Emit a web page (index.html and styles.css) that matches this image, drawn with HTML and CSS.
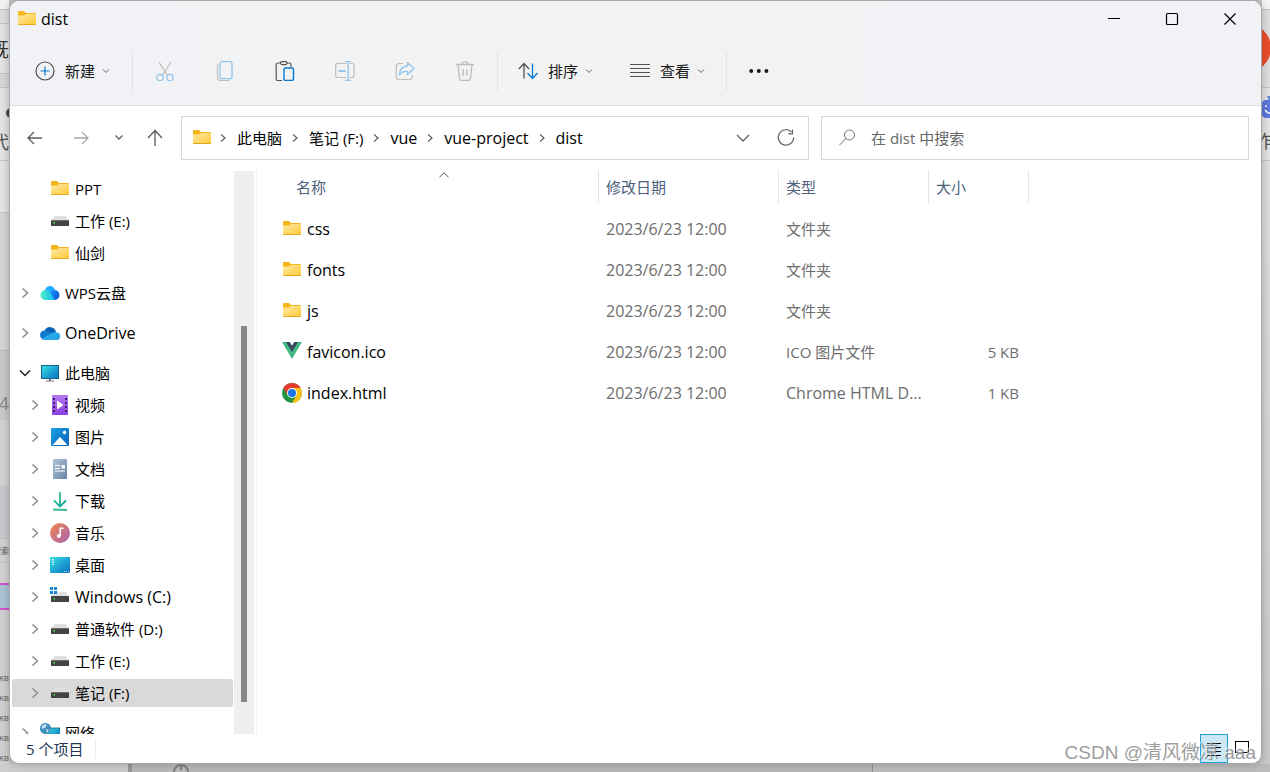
FILE: index.html
```
<!DOCTYPE html>
<html lang="zh-CN">
<head>
<meta charset="utf-8">
<title>dist</title>
<link rel="stylesheet" href="styles.css">
</head>
<body>
<svg class="defs" aria-hidden="true">
  <defs>
    <linearGradient id="gFolder" x1="0" y1="0" x2="1" y2="1"><stop offset="0" stop-color="#ffe9a6"/><stop offset="1" stop-color="#ffca3a"/></linearGradient>
    <linearGradient id="gScreen" x1="0" y1="0" x2="1" y2="1"><stop offset="0" stop-color="#35dfe6"/><stop offset="1" stop-color="#0a6fc0"/></linearGradient>
    <linearGradient id="gVideo" x1="0" y1="0" x2="0" y2="1"><stop offset="0" stop-color="#b678f0"/><stop offset="1" stop-color="#8a3ee0"/></linearGradient>
    <linearGradient id="gPic" x1="0" y1="0" x2="1" y2="1"><stop offset="0" stop-color="#1ba1e6"/><stop offset="1" stop-color="#0a62b4"/></linearGradient>
    <linearGradient id="gDoc" x1="0" y1="0" x2="1" y2="1"><stop offset="0" stop-color="#b0c4d8"/><stop offset="1" stop-color="#6684a6"/></linearGradient>
    <linearGradient id="gMusic" x1="0" y1="0" x2="1" y2="1"><stop offset="0" stop-color="#f58a52"/><stop offset="1" stop-color="#a55fb0"/></linearGradient>
    <linearGradient id="gDown" x1="0" y1="0" x2="1" y2="1"><stop offset="0" stop-color="#3cc98a"/><stop offset="1" stop-color="#0a9f9c"/></linearGradient>
    <linearGradient id="gWps" x1="0" y1="0" x2="1" y2="0"><stop offset="0" stop-color="#4ff0bd"/><stop offset="1" stop-color="#12b8ff"/></linearGradient>
    <linearGradient id="gWps2" x1="0" y1="0" x2="1" y2="1"><stop offset="0" stop-color="#1f9dff"/><stop offset="1" stop-color="#0a48cf"/></linearGradient>
  </defs>
  <symbol id="folder" viewBox="0 0 20 20"><path d="M1 3q0-1 1-1h5l2 2h9q1 0 1 1v10q0 1-1 1H2q-1 0-1-1z" fill="#f7b51c"/><path d="M1 6.500h6L9 5h10v10H1z" fill="url(#gFolder)"/><path d="M1.500 15.500h17" stroke="#e5a51d"/></symbol>
  <symbol id="drive" viewBox="0 0 20 20"><path d="M4.500 5h11L19 9.500H1z" fill="#dfe1e5"/><rect x="1" y="9" width="18" height="6" rx=".6" fill="#444"/><path d="M1 9.500h18" stroke="#777" stroke-width=".8"/><rect x="3.400" y="11" width="1.600" height="1.600" fill="#2fe84d"/></symbol>
  <symbol id="chev-r" viewBox="0 0 20 20"><path d="M7.500 5.500 12.500 10l-5 4.500" fill="none" stroke="currentColor" stroke-width="1.500"/></symbol>
  <symbol id="chev-d" viewBox="0 0 20 20"><path d="M5 7.500l5 5 5-5" fill="none" stroke="currentColor" stroke-width="1.500"/></symbol>
  <symbol id="chev-s" viewBox="0 0 10 10"><path d="M2 3.500l3 3 3-3" fill="none" stroke="currentColor"/></symbol>
</svg>

<div class="desktop">
  <div class="edge edge-left" aria-hidden="true">
    <div class="strip s1"></div><div class="strip s2"></div><div class="strip s3"><span>既</span></div>
    <div class="strip s4"></div><div class="strip s5"><i class="blob"></i><span>代</span></div><div class="strip s6"></div>
    <div class="strip s7"></div><div class="strip s8"></div><div class="strip s9"><span>4</span></div><div class="strip s10"></div>
    <div class="strip s11"></div><div class="strip s12"><span>搜索</span></div><div class="strip s13"></div>
    <div class="strip s14"></div><div class="strip s15"><span>KB</span><span>KB</span><span>KB</span><span>KB</span><span>KB</span></div>
  </div>

  <main class="window">
    <header class="head">
      <div class="titlebar">
        <svg class="ic20"><use href="#folder"/></svg>
        <h1 class="title">dist</h1>
        <div class="wincontrols">
          <button aria-label="最小化"><svg class="ic20" viewBox="0 0 20 20"><path d="M4 9.500h12" stroke="#000"/></svg></button>
          <button aria-label="最大化"><svg class="ic20" viewBox="0 0 20 20"><rect x="4.500" y="4.500" width="11" height="11" rx="1" fill="none" stroke="#000" stroke-width="1.200"/></svg></button>
          <button aria-label="关闭"><svg class="ic20" viewBox="0 0 20 20"><path d="M4.500 4.500l11 11m0-11l-11 11" stroke="#000" stroke-width="1.200"/></svg></button>
        </div>
      </div>
      <div class="commands">
        <button class="cmd cmd-new"><svg class="ic20" viewBox="0 0 20 20"><circle cx="10" cy="10" r="9" fill="none" stroke="#505050" stroke-width="1.200"/><path d="M10 5.500v9M5.500 10h9" stroke="#0a78d0" stroke-width="1.200"/></svg><span>新建</span><svg class="ic10"><use href="#chev-s"/></svg></button>
        <span class="sep"></span>
        <button class="tool" aria-label="剪切" disabled><svg class="ic20" viewBox="0 0 20 20" fill="none"><path d="M4 1l8.500 13.500M16 1L7.500 14.500" stroke="#bdbdbd" stroke-width="1.200"/><circle cx="5" cy="16.500" r="3.200" stroke="#94c5ea" stroke-width="1.300"/><circle cx="15" cy="16.500" r="3.200" stroke="#94c5ea" stroke-width="1.300"/></svg></button>
        <button class="tool" aria-label="复制" disabled><svg class="ic20" viewBox="0 0 20 20" fill="none"><path d="M3.500 3.500Q2.500 4 2.500 5.500V16q0 3.500 3.500 3.500h6.500q1.500 0 2-1" stroke="#bdbdbd" stroke-width="1.200"/><rect x="5" y=".7" width="12" height="17" rx="2" stroke="#94c5ea" stroke-width="1.300"/></svg></button>
        <button class="tool" aria-label="粘贴"><svg class="ic20" viewBox="0 0 20 20" fill="none"><path d="M6 2H2.700Q1.200 2 1.200 3.500V18q0 1.500 1.500 1.500H7M11.500 2h3q1.500 0 1.500 1.500V6" stroke="#555" stroke-width="1.200"/><rect x="5.500" y=".6" width="6.500" height="3" rx="1.500" stroke="#555" stroke-width="1.200"/><rect x="9" y="7" width="9.500" height="12.500" rx="1.500" stroke="#0a78d0" stroke-width="1.400"/></svg></button>
        <button class="tool" aria-label="重命名" disabled><svg class="ic20" viewBox="0 0 20 20" fill="none"><path d="M11.500 2.500h-9Q.7 2.500.7 4.500v10q0 2 2 2h9M15 2.500h2q2 0 2 2v10q0 2-2 2h-2" stroke="#bdbdbd" stroke-width="1.200"/><path d="M13.200 1v18M10.200.7h6M10.200 19.300h6" stroke="#94c5ea" stroke-width="1.300"/><path d="M3.500 10h7" stroke="#94c5ea" stroke-width="1.800"/></svg></button>
        <button class="tool" aria-label="共享" disabled><svg class="ic20" viewBox="0 0 20 20" fill="none"><path d="M8 2.500H4q-2.700 0-2.700 2.700v10.600q0 2.700 2.700 2.700h10.500q2.700 0 2.700-2.700V14" stroke="#bdbdbd" stroke-width="1.200"/><path d="M12.500 1.500L19 7.500l-6.500 6v-3.200Q7 10 4.300 14 5 5.500 12.500 5z" stroke="#94c5ea" stroke-width="1.300" stroke-linejoin="round"/></svg></button>
        <button class="tool" aria-label="删除" disabled><svg class="ic20" viewBox="0 0 20 20" fill="none" stroke="#bdbdbd" stroke-width="1.300"><path d="M1 3.500h18M3 3.500l1.500 14q.2 2 2 2h7q1.800 0 2-2l1.500-14M7 3.500Q7 .7 10 .7t3 2.800M8.200 8v7M11.800 8v7"/></svg></button>
        <span class="sep"></span>
        <button class="cmd cmd-sort"><svg class="ic20" viewBox="0 0 20 20" fill="none" stroke-width="1.300"><path d="M6 17.500V3M.8 8L6 2.500 11 8" stroke="#505050"/><path d="M14.500 2.500V17M9.500 12l5 5.500 5-5.500" stroke="#0a78d0"/></svg><span>排序</span><svg class="ic10"><use href="#chev-s"/></svg></button>
        <button class="cmd cmd-view"><svg class="ic20" viewBox="0 0 20 20"><path d="M0 3.500h20M0 7.500h20M0 11.500h20M0 15.500h20" stroke="#555" stroke-width="1.200"/></svg><span>查看</span><svg class="ic10"><use href="#chev-s"/></svg></button>
        <span class="sep"></span>
        <button class="tool" aria-label="更多"><svg class="ic20" viewBox="0 0 20 20" fill="#1a1a1a"><circle cx="2.200" cy="10" r="2"/><circle cx="9.800" cy="10" r="2"/><circle cx="17.400" cy="10" r="2"/></svg></button>
      </div>
    </header>

    <nav class="navbar">
      <div class="history">
        <button aria-label="后退"><svg class="ic20" viewBox="0 0 20 20"><path d="M17 10H3.500M9 4l-6 6 6 6" fill="none" stroke="#5a5a5a" stroke-width="1.300"/></svg></button>
        <button aria-label="前进" disabled><svg class="ic20" viewBox="0 0 20 20"><path d="M3 10h13.500M11 4l6 6-6 6" fill="none" stroke="#a8a8a8" stroke-width="1.300"/></svg></button>
        <button class="recent" aria-label="最近位置"><svg class="ic20" viewBox="0 0 20 20"><path d="M6.500 7.500l3.500 3.500 3.500-3.500" fill="none" stroke="#666" stroke-width="1.400"/></svg></button>
        <button class="up" aria-label="向上"><svg class="ic20" viewBox="0 0 20 20"><path d="M10 18V3M3 10l7-7.500 7 7.500" fill="none" stroke="#5a5a5a" stroke-width="1.300"/></svg></button>
      </div>
      <div class="address">
        <svg class="ic20"><use href="#folder"/></svg>
        <svg class="crumb-sep first"><use href="#chev-r"/></svg><button>此电脑</button>
        <svg class="crumb-sep"><use href="#chev-r"/></svg><button>笔记 (F:)</button>
        <svg class="crumb-sep"><use href="#chev-r"/></svg><button class="latin">vue</button>
        <svg class="crumb-sep"><use href="#chev-r"/></svg><button class="latin">vue-project</button>
        <svg class="crumb-sep"><use href="#chev-r"/></svg><button class="latin">dist</button>
        <button class="drop" aria-label="历史记录"><svg class="ic20" viewBox="0 0 20 20"><path d="M4 7l6 6 6-6" fill="none" stroke="#666" stroke-width="1.400"/></svg></button>
        <button class="refresh" aria-label="刷新"><svg class="ic20" viewBox="0 0 20 20" fill="none" stroke="#666" stroke-width="1.200"><path d="M15.500 4A7.700 7.700 0 1 0 17.700 9.500M16.500 1.500v4.300h-4.300"/></svg></button>
      </div>
      <label class="search">
        <svg class="ic20" viewBox="0 0 20 20" fill="none" stroke="#707070"><circle cx="12.500" cy="7" r="5"/><path d="M9 10.500L2.500 17"/></svg>
        <input type="text" placeholder="在 dist 中搜索" aria-label="在 dist 中搜索">
      </label>
    </nav>

    <div class="content">
      <aside class="sidebar">
        <ul class="tree">
          <li class="sub"><button><i class="nochev"></i><svg class="ic20"><use href="#folder"/></svg>PPT</button></li>
          <li class="sub"><button><i class="nochev"></i><svg class="ic20"><use href="#drive"/></svg>工作 (E:)</button></li>
          <li class="sub"><button><i class="nochev"></i><svg class="ic20"><use href="#folder"/></svg>仙剑</button></li>
          <li class="top"><button><svg class="chev"><use href="#chev-r"/></svg><svg class="ic20" viewBox="0 0 20 20"><circle cx="10" cy="8" r="5" fill="#21aaff"/><circle cx="14.500" cy="12" r="5" fill="url(#gWps2)"/><path d="M5.500 7Q9 7 11 10.500L15 17H5.500a5 5 0 0 1 0-10z" fill="url(#gWps)"/></svg>WPS云盘</button></li>
          <li class="top latin"><button><svg class="chev"><use href="#chev-r"/></svg><svg class="ic20" viewBox="0 0 20 20"><path d="M4.500 8a6 6 0 0 1 11.500 1l-6 3z" fill="#0a5fb5"/><path d="M4.500 7.500Q7 7 9 8.500L19 14l-2 2.500H4.500a4.500 4.500 0 0 1 0-9z" fill="#117ad0"/><path d="M2 15.500L12 10q2-1.500 4.500-.8A3.900 3.900 0 0 1 16 17H5q-2 0-3-1.500z" fill="#2aa6ea"/></svg>OneDrive</button></li>
          <li class="top"><button><svg class="chev open"><use href="#chev-d"/></svg><svg class="ic20" viewBox="0 0 20 20"><rect x="1.500" y="2.500" width="17" height="13" fill="url(#gScreen)" stroke="#14648c"/><path d="M9 16h2v1.500h3v1H6v-1h3z" fill="#6d7880"/></svg>此电脑</button></li>
          <li class="sub"><button><svg class="chev"><use href="#chev-r"/></svg><svg class="ic20" viewBox="0 0 20 20"><rect x="2" width="16" height="20" rx="1" fill="url(#gVideo)"/><path d="M4 3v15M16 3v15" stroke="#44206e" stroke-width="2" stroke-dasharray="2 2"/><path d="M7 5.500l6.500 4.500L7 14.500z" fill="#fff"/></svg>视频</button></li>
          <li class="sub"><button><svg class="chev"><use href="#chev-r"/></svg><svg class="ic20" viewBox="0 0 20 20"><rect x="1" y="1" width="18" height="18" rx="1" fill="url(#gPic)"/><path d="M2.500 18L10 10l7.500 8z" fill="#fff"/><circle cx="14.500" cy="5.500" r="1.700" fill="#fff"/></svg>图片</button></li>
          <li class="sub"><button><svg class="chev"><use href="#chev-r"/></svg><svg class="ic20" viewBox="0 0 20 20"><rect x="3" width="14" height="20" rx="1" fill="url(#gDoc)"/><path d="M5 6.500h5M5 9.500h5M5 12h10" stroke="#fff" stroke-width="1.200"/><rect x="11.500" y="6" width="3.500" height="3.500" fill="#fff"/></svg>文档</button></li>
          <li class="sub"><button><svg class="chev"><use href="#chev-r"/></svg><svg class="ic20" viewBox="0 0 20 20" fill="none" stroke="url(#gDown)" stroke-width="1.800"><path d="M4 9.500l6 6 6-6M9.800 1l.4 14"/><path d="M3 18.500l14 .4"/></svg>下载</button></li>
          <li class="sub"><button><svg class="chev"><use href="#chev-r"/></svg><svg class="ic20" viewBox="0 0 20 20"><circle cx="10" cy="10" r="10" fill="url(#gMusic)"/><circle cx="8.800" cy="13" r="2" fill="#fff"/><path d="M10.200 13V5.200h3.300" stroke="#fff" stroke-width="1.600" fill="none"/></svg>音乐</button></li>
          <li class="sub"><button><svg class="chev"><use href="#chev-r"/></svg><svg class="ic20" viewBox="0 0 20 20"><rect y="2" width="20" height="16" rx="1" fill="url(#gScreen)"/><path d="M3 4v6" stroke="#fff" stroke-width="1.500" stroke-dasharray="1.500 1"/><path d="M14 16.500h5" stroke="#9fe0ff" stroke-dasharray="1 1"/></svg>桌面</button></li>
          <li class="sub latin"><button><svg class="chev"><use href="#chev-r"/></svg><svg class="ic20" viewBox="0 0 20 20"><path d="M4.500 5h11L19 9.500H1z" fill="#dfe1e5"/><rect x="1" y="9" width="18" height="6" rx=".6" fill="#444"/><rect x="3.400" y="11" width="1.600" height="1.600" fill="#2fe84d"/><path d="M0 0h3v3H0zM4 0h3v3H4zM0 4h3v3H0zM4 4h3v3H4z" fill="#1587d8"/></svg>Windows (C:)</button></li>
          <li class="sub"><button><svg class="chev"><use href="#chev-r"/></svg><svg class="ic20"><use href="#drive"/></svg>普通软件 (D:)</button></li>
          <li class="sub"><button><svg class="chev"><use href="#chev-r"/></svg><svg class="ic20"><use href="#drive"/></svg>工作 (E:)</button></li>
          <li class="sub selected"><button><svg class="chev"><use href="#chev-r"/></svg><svg class="ic20"><use href="#drive"/></svg>笔记 (F:)</button></li>
          <li class="top"><button><svg class="chev"><use href="#chev-r"/></svg><svg class="ic20" viewBox="0 0 20 20"><rect x="7" y="5" width="13" height="10" fill="url(#gScreen)" stroke="#14648c" stroke-width=".8"/><circle cx="5.500" cy="5.500" r="5.500" fill="#3f8dbd"/><path d="M2 3q3-3 5-1L5 5 2 6zM6 6l3 1-2 3z" fill="#c4e4f2"/></svg>网络</button></li>
        </ul>
        <div class="scrollbar"><div class="thumb"></div></div>
      </aside>

      <section class="files">
        <table>
          <colgroup><col class="c-name"><col class="c-date"><col class="c-type"><col class="c-size"></colgroup>
          <thead><tr>
            <th class="name-head">名称<svg class="sort-mark" viewBox="0 0 10 6"><path d="M.5 5.200L5 .8l4.500 4.400" fill="none" stroke="#555"/></svg></th>
            <th>修改日期</th><th>类型</th><th>大小</th>
          </tr></thead>
          <tbody>
            <tr class="spacer"><td colspan="4"></td></tr>
            <tr><td><div class="file"><svg class="ic20"><use href="#folder"/></svg>css</div></td><td class="latin">2023/6/23 12:00</td><td>文件夹</td><td></td></tr>
            <tr><td><div class="file"><svg class="ic20"><use href="#folder"/></svg>fonts</div></td><td class="latin">2023/6/23 12:00</td><td>文件夹</td><td></td></tr>
            <tr><td><div class="file"><svg class="ic20"><use href="#folder"/></svg>js</div></td><td class="latin">2023/6/23 12:00</td><td>文件夹</td><td></td></tr>
            <tr><td><div class="file"><svg class="ic20" viewBox="0 0 20 20"><path d="M0 0h20L10 17z" fill="#41b883"/><path d="M4 0h12l-6 10z" fill="#35495e"/><path d="M7.700 0h4.600L10 3.800z" fill="#fff"/></svg>favicon.ico</div></td><td class="latin">2023/6/23 12:00</td><td>ICO 图片文件</td><td class="size">5 KB</td></tr>
            <tr><td><div class="file"><svg class="ic20" viewBox="0 0 20 20"><circle cx="10" cy="10" r="10" fill="#229342"/><path d="M1.340 5A10 10 0 0 1 18.660 5H10L5.700 12.500z" fill="#e33b2e"/><path d="M18.660 5A10 10 0 0 1 10 20l4.300-7.500L10 5z" fill="#fbc116"/><circle cx="10" cy="10" r="5" fill="#fff"/><circle cx="10" cy="10" r="4" fill="#1a73e8"/></svg>index.html</div></td><td class="latin">2023/6/23 12:00</td><td class="latin">Chrome HTML D...</td><td class="size">1 KB</td></tr>
          </tbody>
        </table>
      </section>
    </div>

    <footer class="status">
      <span class="count">5 个项目</span>
      <div class="views">
        <button class="active" aria-label="详细信息"><svg class="ic20" viewBox="0 0 20 20"><path d="M3 4.500h14M3 8.500h14M3 12.500h14M3 16.500h14" stroke="#000" stroke-width="1.200"/></svg></button>
        <button aria-label="大缩略图"><svg class="ic20" viewBox="0 0 20 20"><rect x="3.500" y="2.500" width="13" height="11" fill="none" stroke="#000"/></svg></button>
      </div>
    </footer>
  </main>

  <div class="edge edge-right" aria-hidden="true">
    <div class="strip r1"></div><div class="strip r2"><i class="dot"></i></div>
    <div class="strip r3"><svg class="bot" viewBox="0 0 9 24"><path d="M5 0h4v5H7z" fill="#5a8ee0"/><rect y="4" width="18" height="18" rx="4" fill="#5c78dc"/><path d="M4 9v2M3 14q3 4 6 3" stroke="#fff" stroke-width="1.500" fill="none"/></svg><span>作</span></div>
    <div class="strip r4"></div>
  </div>
  <div class="edge edge-bottom" aria-hidden="true">
    <svg class="knob" viewBox="0 0 20 8"><path d="M3 8a7 7 0 0 1 14 0M10 0v6" fill="none" stroke="#808080" stroke-width="2"/></svg>
  </div>
  <div class="watermark">CSDN @清风微凉 aaa</div>
</div>
</body>
</html>
```

FILE: styles.css
```
* { box-sizing: border-box; }
body {
  margin: 0;
  font-family: "Open Sans", "Noto Sans CJK SC", sans-serif;
  font-size: 15px;
  line-height: 20px;
  color: #000;
}
button {
  display: flex;
  align-items: center;
  justify-content: center;
  padding: 0;
  border: 0;
  background: none;
  font: inherit;
  color: inherit;
  white-space: nowrap;
}
svg { flex: none; display: block; }
.defs { position: absolute; width: 0; height: 0; }
.ic20 { width: 20px; height: 20px; }
.ic10 { width: 10px; height: 10px; color: #666; }
.latin { font-size: 16px; }

.desktop {
  position: relative;
  display: grid;
  grid-template-columns: 9px 1fr 8px;
  grid-template-rows: 1fr 8px;
  height: 100vh;
  background: #c6c6c6;
}

/* Slivers of the page behind the window */
.edge { overflow: hidden; display: flex; flex-direction: column; }
.strip { flex: none; overflow: hidden; border-bottom: 1px solid #c4c4c4; background: #e4e4e4; color: #555; }
.strip span { display: block; float: right; white-space: nowrap; }
.s1 { height: 10px; background: #f2f2f2; }
.s2 { height: 14px; background: #dedede; }
.s3 { height: 50px; padding-top: 16px; font-size: 20px; color: #333; }
.s4 { height: 14px; background: #d8d8d8; }
.s5 { height: 73px; padding-top: 20px; font-size: 18px; }
.s5 span { margin-top: 14px; }
.s6 { height: 52px; }
.s7 { height: 138px; background: #d6d6d6; border-bottom-color: #bbb; }
.s8 { height: 36px; background: #c8c8c8; border: 0; }
.s9 { height: 33px; padding-top: 6px; background: #cacaca; border: 0; font-size: 18px; color: #888; }
.s10 { height: 67px; background: #d4d4d4; }
.s11 { height: 52px; background: #c9c9ce; }
.s12 { height: 24px; padding-top: 4px; background: #d2d2d2; font-size: 8px; line-height: 16px; }
.s13 { height: 22px; background: #d2d2d2; border-bottom: 2px solid #d84fd0; }
.s14 { height: 25px; background: #abc4d6; border-bottom: 2px solid #d84fd0; }
.s15 { height: 154px; padding-top: 58px; background: #d0d0d0; border: 0; font-size: 8px; }
.blob { display: block; width: 10px; height: 10px; margin-left: 6px; border-radius: 50%; background: #4a4a55; }
.r1 { height: 10px; background: #f4f4f4; }
.r2 { height: 78px; padding-top: 14px; background: #dedede; }
.r3 { height: 73px; padding-top: 8px; font-size: 18px; }
.r3 span { float: left; margin-top: 11px; margin-left: -7px; }
.r4 { flex: 1; background: linear-gradient(#dedede, #c8c8c8); border: 0; }
.dot { display: block; width: 48px; height: 48px; margin-left: -39px; border-radius: 50%; background: #eb4f2c; }
.bot { width: 9px; height: 24px; }
.edge-bottom { grid-column: 1 / -1; background: linear-gradient(90deg, #cdcdcd 0 128px, #999 128px 132px, #b8b8b8 132px 872px, #8f8f8f 872px 873px, #bcbcbc 873px); }
.knob { width: 20px; height: 8px; margin-left: 171px; }

.window {
  display: flex;
  flex-direction: column;
  min-width: 0;
  min-height: 0;
  overflow: hidden;
  background: #fff;
  border: 1px solid #a9a9a9;
  border-radius: 10px;
  box-shadow: 0 0 8px rgba(0, 0, 0, .25);
  z-index: 1;
}

.head { background: linear-gradient(90deg, #f0f2f6, #f3f3f3 35%, #f3f2f3 55%, #f0f2f5 75%, #f1f2f6); border-bottom: 1px solid #dedede; }
.titlebar { display: flex; align-items: center; height: 36px; padding: 0 2px 0 7px; }
.title { margin: 0 0 0 4px; font-size: 16px; font-weight: 400; }
.wincontrols { display: flex; margin-left: auto; }
.wincontrols button { width: 58px; height: 36px; }
.commands { display: flex; align-items: center; height: 68px; color: #1a1a1a; }
.cmd { height: 40px; }
.cmd span { margin: 0 6px 0 10px; }
.cmd-new { padding: 0 19px 0 25px; }
.cmd-sort { margin-left: 18px; }
.cmd-view { margin: 0 18px 0 36px; }
.tool { width: 60px; height: 40px; }
.sep { width: 1px; height: 40px; margin: 0 2px; background: #e2e2e2; }

.navbar { display: flex; align-items: center; padding: 10px 12px 10px 5px; }
.history { display: flex; flex: none; width: 166px; }
.history button { width: 40px; height: 44px; }
.history button + button { margin-left: 6px; }
.history .recent { width: 28px; margin-left: 4px; }
.history .up { width: 32px; margin-left: 6px; }
.address { display: flex; align-items: center; flex: 1 1 628px; height: 44px; padding: 0 12px 0 10px; border: 1px solid #d9d9d9; }
.crumb-sep { width: 16px; height: 16px; margin: 0 6px 0 5px; color: #555; }
.crumb-sep.first { margin-left: 3px; }
.address .drop { margin-left: auto; }
.address .refresh { margin-left: 23px; }
.search { display: flex; align-items: center; flex: 1 1 428px; height: 44px; margin-left: 12px; padding: 0 15px; border: 1px solid #d9d9d9; }
.search input { flex: 1; min-width: 0; margin-left: 14px; padding: 0; border: 0; outline: 0; background: none; font: inherit; }
.search input::placeholder { color: #666; opacity: 1; }

.content { display: flex; flex: 1; min-height: 0; }
.sidebar { display: flex; flex: none; width: 247px; border-right: 1px solid #f3f3f3; }
.tree { flex: 1; margin: 0; padding: 3px 0 0 2px; list-style: none; overflow: hidden; }
.tree li { padding: 2px 1px 2px 0; }
.tree .top { margin-top: 8px; }
.tree button { justify-content: flex-start; gap: 5px; width: 100%; height: 28px; border-radius: 2px; }
.tree .top button { padding-left: 3px; }
.tree .sub button { padding-left: 13px; }
.selected button { background: #d9d9d9; }
.chev, .nochev { width: 20px; height: 20px; color: #8a8a8a; }
.chev.open { color: #222; }
.scrollbar { width: 20px; margin: 1px 2px 0 0; padding: 155px 7px 32px; background: #efefef; }
.thumb { height: 100%; background: #868686; }

.files { flex: 1; min-width: 0; }
table { table-layout: fixed; width: 772px; border-collapse: separate; border-spacing: 0; }
.c-name { width: 342px; }
.c-date { width: 180px; }
.c-type { width: 150px; }
.c-size { width: 100px; }
th { height: 33px; padding: 0 7px; border-right: 1px solid #e5e5e5; font-weight: 400; text-align: left; color: #4c607a; }
.name-head { position: relative; padding-left: 39px; }
.sort-mark { position: absolute; left: 182px; top: 2px; width: 10px; height: 6px; }
td { height: 41px; padding: 0 7px; color: #6d6d6d; white-space: nowrap; }
.spacer td { height: 5px; }
.file { display: flex; align-items: center; gap: 5px; padding-left: 18px; font-size: 16px; color: #000; }
.size { padding-right: 10px; text-align: right; }

.status { display: flex; align-items: center; height: 29px; padding: 0 5px 0 16px; color: #1f3657; }
.count { padding-right: 12px; border-right: 1px solid #eee; }
.views { display: flex; margin-left: auto; }
.views button { width: 28px; height: 29px; border: 1px solid transparent; }
.views .active { border-color: #26a0da; background: #cce8f6; }

.watermark {
  position: absolute;
  right: 14px;
  bottom: 7px;
  z-index: 2;
  font-family: "Liberation Sans", "Noto Sans CJK SC", sans-serif;
  font-size: 19px;
  line-height: 24px;
  color: rgba(130, 130, 130, .8);
  text-shadow: -1px -1px 0 rgba(255, 255, 255, .6);
  pointer-events: none;
}
```
